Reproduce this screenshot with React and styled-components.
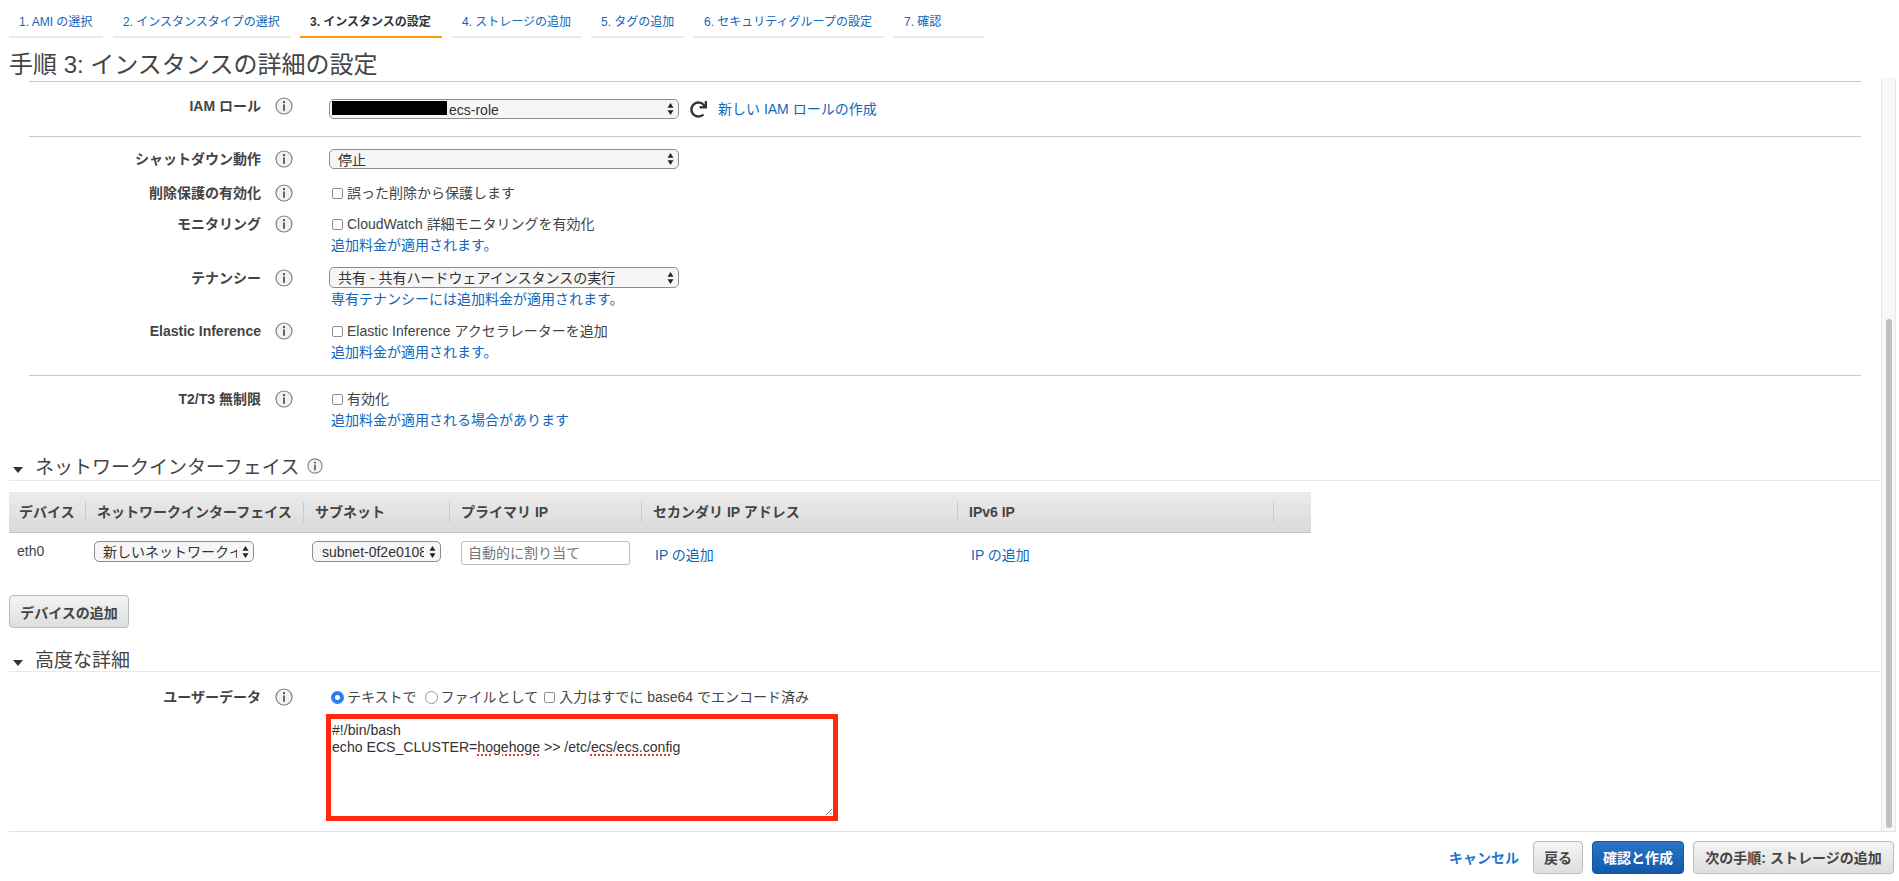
import React from 'react';
import styled, { createGlobalStyle } from 'styled-components';
import { FaRedo } from 'react-icons/fa';

const GlobalStyle = createGlobalStyle`
  html, body {
    margin: 0;
    padding: 0;
    height: 881px;
    overflow: hidden;
    background: #fff;
    color: #444;
    font-family: "Liberation Sans", "Noto Sans CJK JP", sans-serif;
    font-size: 14px;
  }
  * { box-sizing: border-box; }
`;

const Page = styled.div`
  display: flex;
  flex-direction: column;
  height: 881px;
`;

// Wizard steps
const Tabs = styled.nav`
  display: flex;
  gap: 10px;
  height: 38px;
  padding-left: 9px;
`;

const Tab = styled.a`
  width: ${(p) => p.$w}px;
  padding: 13px 0 0 10px;
  font-size: 12px;
  line-height: 18px;
  white-space: nowrap;
  color: ${(p) => (p.$active ? '#333' : '#1166bb')};
  font-weight: ${(p) => (p.$active ? 'bold' : 'normal')};
  border-bottom: 2px solid ${(p) => (p.$active ? '#f90' : '#e9e9e9')};
`;

const Heading = styled.h1`
  margin: 0;
  height: 40px;
  padding: 12px 0 0 9px;
  font-size: 24px;
  line-height: 30px;
  font-weight: normal;
  color: #444;
`;

const Main = styled.div`
  display: flex;
  flex: 1;
  min-height: 0;
  margin: 0 3px 0 9px;
`;

const Content = styled.div`
  flex: 1;
  padding-top: 3px;
`;

const Scrollbar = styled.div`
  width: 15px;
  padding: 241px 3px 3px 4px;
  background: #f8f8f8;
  border-left: 1px solid #e8e8e8;
  border-right: 1px solid #e8e8e8;
`;

const ScrollThumb = styled.div`
  height: 100%;
  background: #c1c1c1;
  border-radius: 4px;
`;

// Form rows
const Form = styled.div`
  margin: 0 20px;
`;

const Rule = styled.div`
  height: 1px;
  margin-top: ${(p) => p.$mt || 0}px;
  background: #c8c8c8;
`;

const Row = styled.div`
  display: grid;
  grid-template-columns: 232px 69px 1fr;
  margin-top: ${(p) => p.$mt || 0}px;
`;

const Label = styled.div`
  height: 20px;
  margin-top: ${(p) => p.$lift || 0}px;
  line-height: 20px;
  text-align: right;
  font-weight: bold;
  color: #444;
`;

const InfoCell = styled.div`
  height: 20px;
  margin-top: ${(p) => p.$lift || 0}px;
  padding-left: 14px;
  display: flex;
  align-items: center;
`;

const Control = styled.div`
  display: flex;
  flex-direction: column;
  min-width: 0;
`;

const Line = styled.label`
  display: flex;
  align-items: center;
  height: 20px;
  line-height: 20px;
  white-space: nowrap;
`;

const HelpLink = styled.a`
  display: block;
  height: 20px;
  line-height: 20px;
  margin-top: 1px;
  padding-left: 1px;
  color: #1166bb;
  white-space: nowrap;
`;

const SelectBox = styled.div`
  position: relative;
  width: ${(p) => p.$w}px;
  height: ${(p) => p.$h || 20}px;
  margin-left: -1px;
  flex: none;
`;

const Select = styled.select`
  appearance: none;
  display: block;
  width: 100%;
  height: 100%;
  margin: 0;
  padding: ${(p) => (p.$short ? 2 : 0)}px 16px 0 ${(p) => p.$pad || 8}px;
  background: #f6f6f6;
  border: 1px solid #8d8d8d;
  border-radius: 5px;
  font-family: inherit;
  font-size: 14px;
  color: #333;
  outline: none;
`;

const SelectArrows = styled.svg`
  position: absolute;
  top: 50%;
  right: 5px;
  width: 7px;
  height: 14px;
  margin-top: -7px;
  pointer-events: none;
`;

const Redaction = styled.div`
  position: absolute;
  left: 3px;
  top: 2px;
  width: 115px;
  height: 14px;
  background: #000;
`;

const InlineRow = styled.div`
  display: flex;
  align-items: center;
`;

const RefreshButton = styled.span`
  display: flex;
  margin: 0 11px 0 11px;
  color: #333;
  font-size: 17px;
`;

const ActionLink = styled.a`
  margin-top: -3px;
  color: #1166bb;
  white-space: nowrap;
`;

const CheckBox = styled.input.attrs({ type: 'checkbox' })`
  appearance: none;
  width: 11px;
  height: 11px;
  margin: 1px 4px 0 2px;
  flex: none;
  background: #fff;
  border: 1px solid #8f8f8f;
  border-radius: 2px;
`;

const Radio = styled.input.attrs({ type: 'radio' })`
  appearance: none;
  width: 13px;
  height: 13px;
  margin: 1px 3px 0 ${(p) => p.$ml ?? 1}px;
  flex: none;
  background: #fff;
  border: 1px solid #9a9a9a;
  border-radius: 50%;

  &:checked {
    border: 4px solid #2f7cf0;
    background: #fff;
  }
`;

// Collapsible section headers
const SectionTitle = styled.div`
  display: flex;
  align-items: center;
  height: 25px;
  margin-top: ${(p) => p.$mt}px;
  padding: ${(p) => p.$pt || 0}px 0 0 4px;
  font-size: 19px;
  line-height: 20px;
  color: #444;
  border-bottom: 1px solid #e8e8e8;
`;

const Caret = styled.span`
  flex: none;
  width: 0;
  height: 0;
  margin: 3px 12px 0 0;
  border-left: 5px solid transparent;
  border-right: 5px solid transparent;
  border-top: 6px solid #333;
`;

const TitleInfo = styled.span`
  display: flex;
  margin: -4px 0 0 8px;
`;

// Network table
const NetworkTable = styled.div`
  display: grid;
  width: 1302px;
  margin-top: 11px;
  grid-template-columns: 77px 218px 146px 192px 316px 316px 37px;
`;

const HeadCell = styled.div`
  display: flex;
  align-items: center;
  height: 41px;
  padding: 10px 0 11px;
  background: linear-gradient(#ebebeb, #dadada);
  border-bottom: 1px solid #c4c4c4;
  font-weight: bold;
  color: #444;
`;

const HeadLabel = styled.span`
  display: block;
  width: 100%;
  height: 20px;
  padding-left: ${(p) => p.$pl ?? 11}px;
  line-height: 20px;
  white-space: nowrap;
  border-right: 1px solid ${(p) => (p.$last ? 'transparent' : '#c9c9c9')};
  box-shadow: ${(p) => (p.$last ? 'none' : '1px 0 0 #f5f5f5')};
`;

const BodyCell = styled.div`
  height: 31px;
  padding: 8px 0 0 ${(p) => p.$pl}px;
`;

const CellText = styled.span`
  display: block;
  line-height: 20px;
`;

const CellLink = styled.a`
  display: block;
  margin-top: 4px;
  line-height: 20px;
  color: #1166bb;
  white-space: nowrap;
`;

const TextInput = styled.input`
  display: block;
  width: 169px;
  height: 24px;
  padding: 0 6px;
  background: #fff;
  border: 1px solid #bdbdbd;
  border-radius: 3px;
  font-family: inherit;
  font-size: 14px;
  outline: none;

  &::placeholder {
    color: #757575;
  }
`;

const Button = styled.button`
  display: block;
  width: ${(p) => p.$w}px;
  height: 33px;
  padding: 0;
  background: ${(p) => (p.$primary ? 'linear-gradient(#2a75c8, #1259a9)' : 'linear-gradient(#f4f4f4, #dedede)')};
  border: 1px solid ${(p) => (p.$primary ? '#15559c' : '#bcbcbc')};
  border-radius: 4px;
  font-family: inherit;
  font-size: 14px;
  font-weight: bold;
  color: ${(p) => (p.$primary ? '#fff' : '#444')};
  white-space: nowrap;
`;

const AddDeviceButton = styled(Button)`
  margin-top: 31px;
`;

// User data
const OptionLabel = styled.span`
  margin-right: 4px;
`;

const Annotation = styled.div`
  position: relative;
  width: 512px;
  height: 107px;
  margin: 7px 0 0 -4px;
  border: 5px solid #ff2a0d;
  background: #fff;
`;

const ScriptText = styled.div`
  padding: 3px 0 0 1px;
  font-size: 14.1px;
  line-height: 17px;
  color: #333;
  white-space: pre;
`;

const Misspelt = styled.span`
  text-decoration: underline dotted #e8392c 1.5px;
  text-underline-offset: 2px;
`;

const ResizeGrip = styled.svg`
  position: absolute;
  right: 0;
  bottom: 0;
  width: 8px;
  height: 8px;
`;

// Footer
const Footer = styled.footer`
  display: flex;
  justify-content: flex-end;
  align-items: center;
  gap: 9px;
  height: 50px;
  margin: 0 3px 0 9px;
  padding: 1px 2px 0 0;
  border-top: 1px solid #e4e4e4;
`;

const CancelLink = styled.a`
  margin-right: 5px;
  font-weight: bold;
  color: #1f77d0;
`;

const InfoIcon = ({ size = 18 }) => (
  <svg width={size} height={size} viewBox="0 0 18 18">
    <circle cx="9" cy="9" r="8" fill="#f2f2f2" stroke="#808080" strokeWidth="1.2" />
    <circle cx="9" cy="5.2" r="1.1" fill="#444" />
    <rect x="8.2" y="7.4" width="1.6" height="6.4" fill="#444" />
  </svg>
);

const Arrows = () => (
  <SelectArrows viewBox="0 0 7 14">
    <path d="M3.5 1 L6.5 5.8 L0.5 5.8 Z" fill="#222" />
    <path d="M3.5 13 L6.5 8.2 L0.5 8.2 Z" fill="#222" />
  </SelectArrows>
);

const FormSelect = ({ w, h, value, pad, children }) => (
  <SelectBox $w={w} $h={h}>
    <Select $pad={pad} $short={!h} defaultValue={value}>
      <option>{value}</option>
    </Select>
    <Arrows />
    {children}
  </SelectBox>
);

const FormRow = ({ label, mt, lift, children }) => (
  <Row $mt={mt}>
    <Label $lift={lift}>{label}</Label>
    <InfoCell $lift={lift}>
      <InfoIcon />
    </InfoCell>
    <Control>{children}</Control>
  </Row>
);

const steps = [
  { name: '1. AMI の選択', w: 94 },
  { name: '2. インスタンスタイプの選択', w: 177 },
  { name: '3. インスタンスの設定', w: 142, active: true },
  { name: '4. ストレージの追加', w: 129 },
  { name: '5. タグの追加', w: 93 },
  { name: '6. セキュリティグループの設定', w: 190 },
  { name: '7. 確認', w: 90 },
];

const columns = ['デバイス', 'ネットワークインターフェイス', 'サブネット', 'プライマリ IP', 'セカンダリ IP アドレス', 'IPv6 IP'];

const App = () => (
  <Page>
    <GlobalStyle />
    <Tabs>
      {steps.map((s) => (
        <Tab key={s.name} $w={s.w} $active={s.active}>{s.name}</Tab>
      ))}
    </Tabs>
    <Heading>手順 3: インスタンスの詳細の設定</Heading>
    <Main>
      <Content>
        <Form>
          <Rule />
          <FormRow label="IAM ロール" mt={17} lift={-3}>
            <InlineRow>
              <FormSelect w={350} value="ecs-role" pad={119}>
                <Redaction />
              </FormSelect>
              <RefreshButton><FaRedo /></RefreshButton>
              <ActionLink>新しい IAM ロールの作成</ActionLink>
            </InlineRow>
          </FormRow>
          <Rule $mt={17} />
          <FormRow label="シャットダウン動作" mt={12}>
            <FormSelect w={350} value="停止" />
          </FormRow>
          <FormRow label="削除保護の有効化" mt={14}>
            <Line><CheckBox />誤った削除から保護します</Line>
          </FormRow>
          <FormRow label="モニタリング" mt={11}>
            <Line><CheckBox />CloudWatch 詳細モニタリングを有効化</Line>
            <HelpLink>追加料金が適用されます。</HelpLink>
          </FormRow>
          <FormRow label="テナンシー" mt={12} lift={1}>
            <FormSelect w={350} h={21} value="共有 - 共有ハードウェアインスタンスの実行" />
            <HelpLink>専有テナンシーには追加料金が適用されます。</HelpLink>
          </FormRow>
          <FormRow label="Elastic Inference" mt={12}>
            <Line><CheckBox />Elastic Inference アクセラレーターを追加</Line>
            <HelpLink>追加料金が適用されます。</HelpLink>
          </FormRow>
          <Rule $mt={13} />
          <FormRow label="T2/T3 無制限" mt={13}>
            <Line><CheckBox />有効化</Line>
            <HelpLink>追加料金が適用される場合があります</HelpLink>
          </FormRow>
        </Form>

        <SectionTitle $mt={26}>
          <Caret />
          ネットワークインターフェイス
          <TitleInfo><InfoIcon size={16} /></TitleInfo>
        </SectionTitle>
        <NetworkTable>
          {columns.map((c, i) => (
            <HeadCell key={c}>
              <HeadLabel $pl={i === 0 ? 10 : 11}>{c}</HeadLabel>
            </HeadCell>
          ))}
          <HeadCell><HeadLabel $last /></HeadCell>
          <BodyCell $pl={8}><CellText>eth0</CellText></BodyCell>
          <BodyCell $pl={9}>
            <FormSelect w={160} h={21} value="新しいネットワークインターフェイス" />
          </BodyCell>
          <BodyCell $pl={9}>
            <FormSelect w={129} h={21} pad={9} value="subnet-0f2e01080a1b2c3d" />
          </BodyCell>
          <BodyCell $pl={11}><TextInput placeholder="自動的に割り当て" /></BodyCell>
          <BodyCell $pl={13}><CellLink>IP の追加</CellLink></BodyCell>
          <BodyCell $pl={13}><CellLink>IP の追加</CellLink></BodyCell>
          <BodyCell $pl={0} />
        </NetworkTable>
        <AddDeviceButton $w={120}>デバイスの追加</AddDeviceButton>

        <SectionTitle $mt={19} $pt={4}>
          <Caret />
          高度な詳細
        </SectionTitle>
        <Form>
          <FormRow label="ユーザーデータ" mt={15}>
            <Line>
              <Radio name="userdata" defaultChecked />
              <OptionLabel>テキストで</OptionLabel>
              <Radio name="userdata" $ml={4} />
              <OptionLabel>ファイルとして</OptionLabel>
              <CheckBox />
              入力はすでに base64 でエンコード済み
            </Line>
            <Annotation>
              <ScriptText>
                {'#!/bin/bash\necho ECS_CLUSTER='}
                <Misspelt>hogehoge</Misspelt>
                {' >> /etc/'}
                <Misspelt>ecs</Misspelt>
                /
                <Misspelt>ecs.config</Misspelt>
              </ScriptText>
              <ResizeGrip viewBox="0 0 8 8">
                <path d="M1 7 L7 1 M4.5 7 L7 4.5" stroke="#777" strokeWidth="1" />
              </ResizeGrip>
            </Annotation>
          </FormRow>
        </Form>
      </Content>
      <Scrollbar><ScrollThumb /></Scrollbar>
    </Main>
    <Footer>
      <CancelLink>キャンセル</CancelLink>
      <Button $w={50}>戻る</Button>
      <Button $primary $w={92}>確認と作成</Button>
      <Button $w={201}>次の手順: ストレージの追加</Button>
    </Footer>
  </Page>
);

export default App;
